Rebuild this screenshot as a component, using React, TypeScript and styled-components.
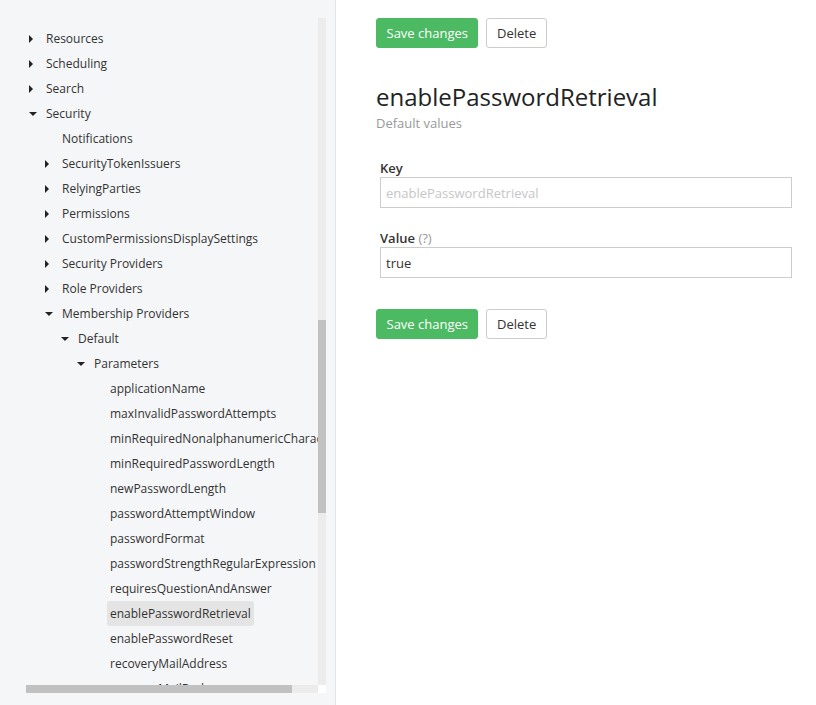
import React from "react";
import styled, { createGlobalStyle } from "styled-components";

const Global = createGlobalStyle`
  html, body { margin: 0; padding: 0; background: #fff; }
  body { font-family: "Open Sans", "Noto Sans", sans-serif; color: #333; }
  * { box-sizing: border-box; }
`;

const Page = styled.div`
  display: flex;
  width: 816px;
  height: 705px;
  overflow: hidden;
`;

const Sidebar = styled.aside`
  width: 336px;
  flex: none;
  background: #f5f6f8;
  border-right: 1px solid #e3e4e6;
  padding: 18px 9px 12px 26px;
`;

const ScrollFrame = styled.div`
  display: grid;
  grid-template-columns: 292px 8px;
  grid-template-rows: 667px 8px;
  height: 675px;
`;

const Viewport = styled.div`
  overflow: hidden;
  padding-top: 8px;
`;

const VTrack = styled.div`
  background: #ececec;
  display: flex;
  flex-direction: column;
`;

const VThumb = styled.div`
  margin-top: 302px;
  height: 193px;
  background: #c1c1c1;
`;

const HTrack = styled.div`
  background: #ececec;
  display: flex;
`;

const HThumb = styled.div`
  width: 266px;
  background: #c1c1c1;
`;

const Corner = styled.div`
  background: #fff;
`;

const Row = styled.div<{ $level: number }>`
  display: flex;
  align-items: center;
  height: 25px;
  padding-left: ${(p) => p.$level * 16}px;
  white-space: nowrap;
`;

const Toggle = styled.span`
  width: 17px;
  height: 25px;
  flex: none;
  display: flex;
  align-items: center;
  padding-left: 3px;
`;

const Caret = styled.span<{ $open: boolean }>`
  width: 0;
  height: 0;
  ${(p) =>
    p.$open
      ? `border-top: 4px solid #222; border-left: 4px solid transparent; border-right: 4px solid transparent; margin-top: 1px;`
      : `border-left: 4px solid #222; border-top: 4px solid transparent; border-bottom: 4px solid transparent; margin-top: 1px;`}
`;

const Label = styled.span<{ $selected?: boolean }>`
  font-size: 12px;
  line-height: 25px;
  padding: 0 3px;
  border-radius: 3px;
  color: #333;
  background: ${(p) => (p.$selected ? "#e4e4e4" : "transparent")};
`;

const Main = styled.main`
  flex: 1;
  padding: 18px 24px 0 40px;
`;

const Toolbar = styled.div`
  display: flex;
  gap: 8px;
`;

const Button = styled.button<{ $primary?: boolean }>`
  height: 30px;
  padding: 0 9.5px;
  font-family: "Open Sans", sans-serif;
  font-size: 13px;
  border-radius: 3px;
  cursor: pointer;
  border: 1px solid ${(p) => (p.$primary ? "#4cb963" : "#cccccc")};
  background: ${(p) => (p.$primary ? "#4cb963" : "#fff")};
  color: ${(p) => (p.$primary ? "#fff" : "#333")};
`;

const Title = styled.h1`
  margin: 34px 0 0;
  font-size: 24px;
  line-height: 29px;
  font-weight: 400;
  color: #222;
`;

const Subtitle = styled.div`
  margin-top: 3px;
  font-size: 13px;
  line-height: 18px;
  color: #999;
`;

const Form = styled.div`
  margin: 27px 0 0 4px;
  display: flex;
  flex-direction: column;
`;

const Field = styled.div`
  display: flex;
  flex-direction: column;
  margin-bottom: 21px;
`;

const FieldLabel = styled.label`
  font-size: 13px;
  line-height: 18px;
  font-weight: 600;
  color: #333;
`;

const Hint = styled.span`
  font-weight: 400;
  color: #999;
`;

const Input = styled.input`
  height: 31px;
  border: 1px solid #cccccc;
  padding: 0 5px;
  font-family: "Open Sans", sans-serif;
  font-size: 13px;
  color: #333;
  background: #fff;
  outline: none;
  &:disabled { color: #c6c6c6; background: #fff; }
`;

const BottomBar = styled(Toolbar)`
  margin-top: 10px;
`;

type Node = { label: string; level: number; state?: "open" | "closed"; selected?: boolean };

const nodes: Node[] = [
  { label: "Resources", level: 0, state: "closed" },
  { label: "Scheduling", level: 0, state: "closed" },
  { label: "Search", level: 0, state: "closed" },
  { label: "Security", level: 0, state: "open" },
  { label: "Notifications", level: 1 },
  { label: "SecurityTokenIssuers", level: 1, state: "closed" },
  { label: "RelyingParties", level: 1, state: "closed" },
  { label: "Permissions", level: 1, state: "closed" },
  { label: "CustomPermissionsDisplaySettings", level: 1, state: "closed" },
  { label: "Security Providers", level: 1, state: "closed" },
  { label: "Role Providers", level: 1, state: "closed" },
  { label: "Membership Providers", level: 1, state: "open" },
  { label: "Default", level: 2, state: "open" },
  { label: "Parameters", level: 3, state: "open" },
  { label: "applicationName", level: 4 },
  { label: "maxInvalidPasswordAttempts", level: 4 },
  { label: "minRequiredNonalphanumericCharacters", level: 4 },
  { label: "minRequiredPasswordLength", level: 4 },
  { label: "newPasswordLength", level: 4 },
  { label: "passwordAttemptWindow", level: 4 },
  { label: "passwordFormat", level: 4 },
  { label: "passwordStrengthRegularExpression", level: 4 },
  { label: "requiresQuestionAndAnswer", level: 4 },
  { label: "enablePasswordRetrieval", level: 4, selected: true },
  { label: "enablePasswordReset", level: 4 },
  { label: "recoveryMailAddress", level: 4 },
  { label: "recoveryMailBody", level: 4 },
];

export default function App() {
  return (
    <Page>
      <Global />
      <Sidebar>
        <ScrollFrame>
          <Viewport>
            {nodes.map((n) => (
              <Row key={n.label} $level={n.level}>
                <Toggle>{n.state && <Caret $open={n.state === "open"} />}</Toggle>
                <Label $selected={n.selected}>{n.label}</Label>
              </Row>
            ))}
          </Viewport>
          <VTrack>
            <VThumb />
          </VTrack>
          <HTrack>
            <HThumb />
          </HTrack>
          <Corner />
        </ScrollFrame>
      </Sidebar>
      <Main>
        <Toolbar>
          <Button $primary>Save changes</Button>
          <Button>Delete</Button>
        </Toolbar>
        <Title>enablePasswordRetrieval</Title>
        <Subtitle>Default values</Subtitle>
        <Form>
          <Field>
            <FieldLabel>Key</FieldLabel>
            <Input disabled value="enablePasswordRetrieval" readOnly />
          </Field>
          <Field>
            <FieldLabel>
              Value <Hint>(?)</Hint>
            </FieldLabel>
            <Input defaultValue="true" />
          </Field>
        </Form>
        <BottomBar>
          <Button $primary>Save changes</Button>
          <Button>Delete</Button>
        </BottomBar>
      </Main>
    </Page>
  );
}
